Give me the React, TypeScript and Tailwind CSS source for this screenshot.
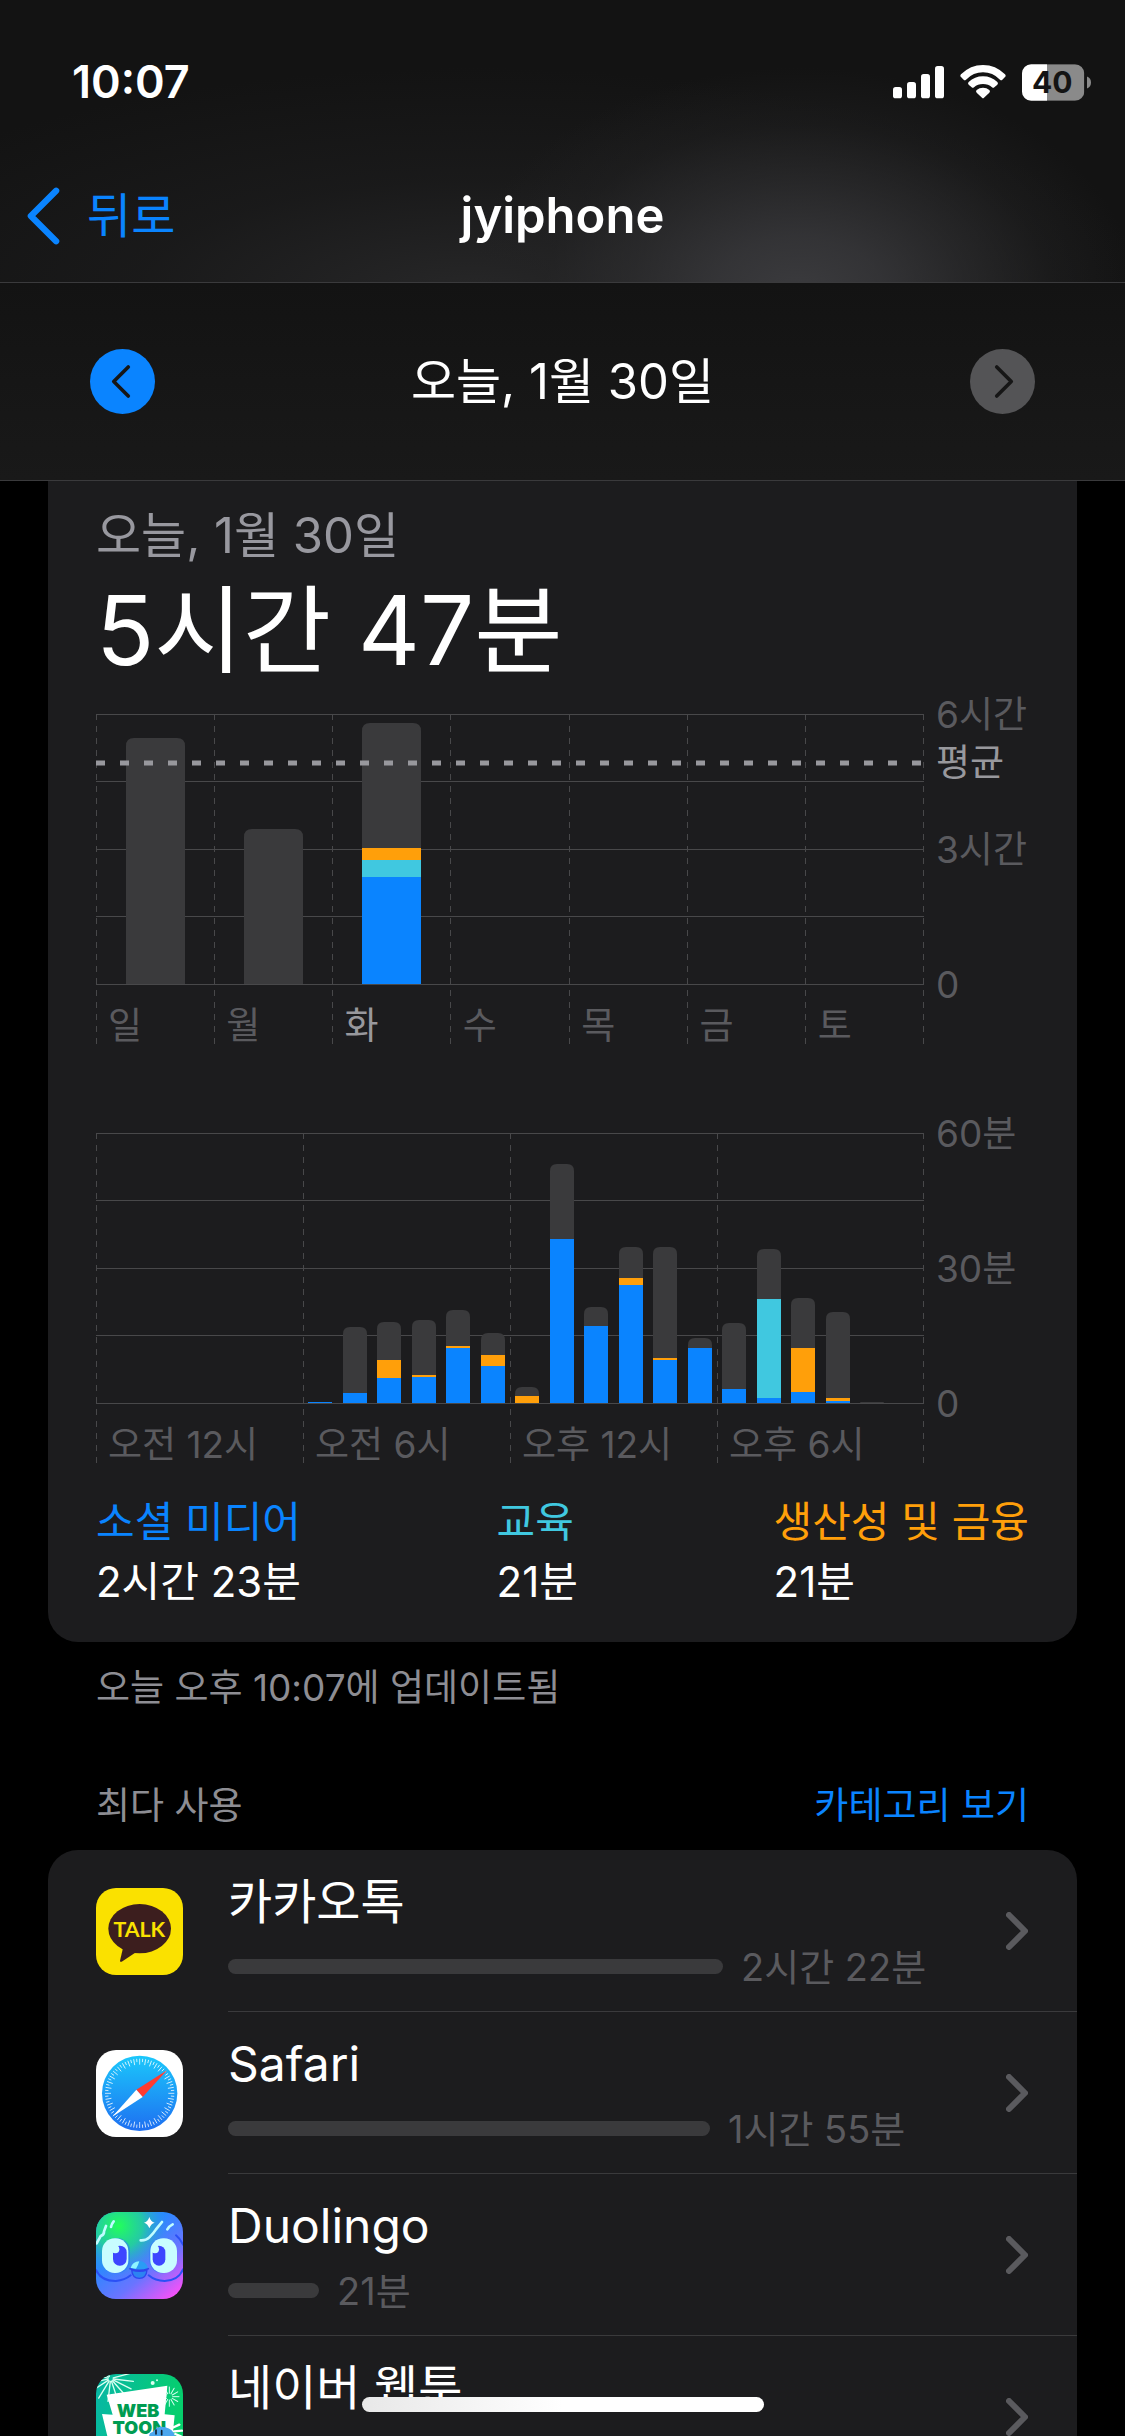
import type { ReactNode } from 'react';

const BLUE = '#0a84ff';
const CYAN = '#40c8e0';
const ORANGE = '#ff9f0a';
const GRAY = '#3a3a3c';

type Bar = { slot: number; total: number; parts?: [string, number][] };

// Heights are in chart units, 270 units is the full height of the plot
const weekBars: Bar[] = [
    { slot: 0, total: 246 },
    { slot: 1, total: 155 },
    { slot: 2, total: 261, parts: [[BLUE, 107], [CYAN, 17], [ORANGE, 12]] },
];

const dayBars: Bar[] = [
    { slot: 6, total: 1, parts: [[BLUE, 1]] },
    { slot: 7, total: 76, parts: [[BLUE, 10]] },
    { slot: 8, total: 81, parts: [[BLUE, 25], [ORANGE, 18]] },
    { slot: 9, total: 83, parts: [[BLUE, 26], [ORANGE, 2]] },
    { slot: 10, total: 93, parts: [[BLUE, 55], [ORANGE, 2]] },
    { slot: 11, total: 70, parts: [[BLUE, 37], [ORANGE, 11]] },
    { slot: 12, total: 16, parts: [[ORANGE, 7]] },
    { slot: 13, total: 239, parts: [[BLUE, 164]] },
    { slot: 14, total: 96, parts: [[BLUE, 77]] },
    { slot: 15, total: 156, parts: [[BLUE, 118], [ORANGE, 7]] },
    { slot: 16, total: 156, parts: [[BLUE, 43], [ORANGE, 2]] },
    { slot: 17, total: 65, parts: [[BLUE, 55]] },
    { slot: 18, total: 80, parts: [[BLUE, 14]] },
    { slot: 19, total: 154, parts: [[BLUE, 5], [CYAN, 99]] },
    { slot: 20, total: 105, parts: [[BLUE, 11], [ORANGE, 44]] },
    { slot: 21, total: 91, parts: [[BLUE, 2], [ORANGE, 3]] },
    { slot: 22, total: 1 },
];

const legend = [
    { name: '소셜 미디어', time: '2시간 23분', color: 'text-[#0a84ff]' },
    { name: '교육', time: '21분', color: 'text-[#40c8e0]' },
    { name: '생산성 및 금융', time: '21분', color: 'text-[#ff9f0a]' },
];

type ChartProps = {
    title: string;
    bars: Bar[];
    slots: number;
    barWidth: number;
    radius: number;
    columns: string[];
    active?: number;
    scale: string[];
    average?: number;
};

function Chart({ title, bars, slots, barWidth, radius, columns, active, scale, average }: ChartProps) {
    const top = 24;
    const base = 294;
    const width = 828;
    const colWidth = width / columns.length;
    const slotWidth = width / slots;

    return (
        <svg viewBox="0 0 933 360" className="block w-full overflow-visible" role="img" aria-label={title}>
            {/* Grid */}
            {[0, 1, 2, 3, 4].map((i) => (
                <rect key={i} x="0" y={Math.floor(top + i * 67.5)} width={width} height="1" fill="#48484a" />
            ))}
            {[...columns, ''].map((_, i) => (
                <line
                    key={i}
                    x1={Math.min(Math.floor(i * colWidth), width - 1) + 0.5}
                    x2={Math.min(Math.floor(i * colWidth), width - 1) + 0.5}
                    y1={top}
                    y2="354"
                    stroke="#48484a"
                    strokeDasharray="6 6"
                />
            ))}

            {/* Bars */}
            {bars.map((bar) => {
                const x = Math.round(bar.slot * slotWidth + (slotWidth - barWidth) / 2);
                const r = Math.min(radius, bar.total);
                let y = base;
                return (
                    <g key={bar.slot}>
                        <path
                            d={`M${x} ${base}v${r - bar.total}q0 ${-r} ${r} ${-r}h${barWidth - 2 * r}q${r} 0 ${r} ${r}v${bar.total - r}z`}
                            fill={GRAY}
                        />
                        {bar.parts?.map(([color, h]) => {
                            y -= h;
                            return <rect key={color} x={x} y={y} width={barWidth} height={h} fill={color} />;
                        })}
                    </g>
                );
            })}

            {/* Average line */}
            {average && (
                <>
                    <line x1="0" x2={width} y1={average} y2={average} stroke="#98989d" strokeWidth="5" strokeDasharray="9 15" />
                    <text x="840" y={average + 13} fontSize="37" fill="#98989d">평균</text>
                </>
            )}

            {/* Axis labels */}
            {scale.map((label, i) => (
                <text key={label} x="840" y={top + i * 135 + 14} fontSize="37" fill="#5a5a5e">
                    {label}
                </text>
            ))}
            {columns.map((label, i) => (
                <text key={label} x={i * colWidth + 12} y="349" fontSize="37" fill={i === active ? '#98989d' : '#5a5a5e'}>
                    {label}
                </text>
            ))}
        </svg>
    );
}

function Chevron({ className, left }: { className: string; left?: boolean }) {
    return (
        <svg viewBox="0 0 22 38" className={className} fill="none" stroke="currentColor" strokeLinecap="round" strokeLinejoin="round" aria-hidden="true">
            <path d={left ? 'M19 3L3 19l16 16' : 'M3 3l16 16L3 35'} />
        </svg>
    );
}

function AppIcon({ children }: { children: ReactNode }) {
    return (
        <svg viewBox="0 0 261 261" className="size-[87px] shrink-0 rounded-[20px]" aria-hidden="true">
            {children}
        </svg>
    );
}

function KakaoIcon() {
    return (
        <AppIcon>
            <rect width="261" height="261" fill="#fae100" />
            <ellipse cx="131" cy="122" rx="94" ry="74" fill="#3c1e1e" />
            <path d="M81 180L72 218q0 5 5 3l44-29z" fill="#3c1e1e" />
            <text x="130" y="147" fontSize="64" fontWeight="700" textAnchor="middle" fill="#fae100" className="font-[Lato,sans-serif]">
                TALK
            </text>
        </AppIcon>
    );
}

function SafariIcon() {
    return (
        <AppIcon>
            <defs>
                <linearGradient id="safari" x1="0" y1="0" x2="0" y2="1">
                    <stop offset="0" stopColor="#1bc8fb" />
                    <stop offset="1" stopColor="#1e6ff1" />
                </linearGradient>
            </defs>
            <rect width="261" height="261" fill="#fff" />
            <circle cx="131" cy="130" r="113" fill="url(#safari)" />
            {Array.from({ length: 72 }, (_, i) => (
                <line
                    key={i}
                    x1="131"
                    x2="131"
                    y1="26"
                    y2={i % 2 ? 36 : 44}
                    stroke="#fff"
                    strokeWidth="2.2"
                    transform={`rotate(${i * 5} 131 130)`}
                />
            ))}
            <path d="M213 61L121 119l19 22z" fill="#ff3b30" />
            <path d="M49 200L121 119l19 22z" fill="#fff" />
        </AppIcon>
    );
}

function DuolingoIcon() {
    return (
        <AppIcon>
            <defs>
                <linearGradient id="duoBase" x1="0.2" y1="0" x2="1" y2="1">
                    <stop offset="0.3" stopColor="#2a88ff" />
                    <stop offset="0.62" stopColor="#6a74ff" />
                    <stop offset="0.95" stopColor="#ff4ff8" />
                </linearGradient>
                <radialGradient id="duoGreen" cx="0.26" cy="0.16" r="0.6">
                    <stop offset="0" stopColor="#22ff5a" />
                    <stop offset="0.45" stopColor="#22dc8c" stopOpacity="0.8" />
                    <stop offset="1" stopColor="#2a88ff" stopOpacity="0" />
                </radialGradient>
            </defs>
            <rect width="261" height="261" fill="url(#duoBase)" />
            <rect width="261" height="261" fill="url(#duoGreen)" />
            <g fill="none" stroke="#2b50f5" strokeWidth="6" strokeLinecap="round">
                <path d="M0 174q16 34 60 33 26-2 44-17" />
                <path d="M158 190q20 17 48 17 42-2 55-35" />
                <path d="M240 70q14 12 21 28" />
            </g>
            <g fill="none" stroke="#bffcff" strokeWidth="8" strokeLinecap="round">
                <path d="M2 94L14 72Q25 68 24 58L30 42" />
                <path d="M45 45q2-10 8-17" />
                <path d="M134 85q16 1 26-9 14-14 20-24l18-22" />
                <path d="M214 52q6-10 16-15" />
            </g>
            <path d="M160 15q4 14 16 17-12 4-16 17-4-13-16-17 12-3 16-17z" fill="#fff" />
            <rect x="24" y="78" width="78" height="106" rx="39" fill="#2b79f5" opacity="0.6" />
            <rect x="160" y="78" width="78" height="106" rx="39" fill="#2b79f5" opacity="0.6" />
            <rect x="18" y="79" width="79" height="104" rx="38" fill="#c8fdff" />
            <rect x="163" y="79" width="80" height="104" rx="38" fill="#c8fdff" />
            {/* Pupils with a round highlight cut at the upper left */}
            <rect x="51" y="101" width="41" height="60" rx="20" fill="#3d45ff" />
            <circle cx="58" cy="112" r="12" fill="#c8fdff" />
            <rect x="170" y="101" width="38" height="60" rx="19" fill="#3d45ff" />
            <circle cx="177" cy="112" r="12" fill="#c8fdff" />
            <path d="M102 170q6-22 27-23 22 1 28 23-27 8-55 0z" fill="#2a9cf5" />
            <path d="M104 168q6-20 26-20-4 14-10 22z" fill="#8ff5ff" />
            <path d="M102 170q28 10 55 0" fill="none" stroke="#2e46ee" strokeWidth="5" strokeLinecap="round" />
            <path d="M107 174q24 8 46 0-2 25-23 25t-23-25z" fill="#2c83f2" stroke="#2e46ee" strokeWidth="4" />
        </AppIcon>
    );
}

function WebtoonIcon() {
    return (
        <AppIcon>
            <defs>
                <linearGradient id="webtoon" x1="0" y1="0.1" x2="1" y2="0.3">
                    <stop offset="0" stopColor="#07b7a5" />
                    <stop offset="1" stopColor="#06cf6c" />
                </linearGradient>
            </defs>
            <rect width="261" height="261" fill="url(#webtoon)" />
            <g stroke="#d9fff0" strokeWidth="4" strokeLinecap="round">
                {[0, 20, 42, 65, 90, 115, 140, 162, 185, 210, 235, 338].map((a) => (
                    <line key={a} x1="52" y1="15" x2="112" y2="22" transform={`rotate(${a} 44 14)`} />
                ))}
                {[0, 30, 60, 90, 120, 150, 180, 210, 240, 270, 300, 330].map((a) => (
                    <line key={a} x1="230" y1="68" x2="249" y2="68" strokeWidth="3" transform={`rotate(${a} 220 68)`} />
                ))}
            </g>
            <circle cx="170" cy="27" r="6" fill="#d9fff0" />
            <circle cx="183" cy="19" r="3" fill="#d9fff0" />
            <path d="M32 62L214 35l-8 86 30 3-14 137H52L18 120l32 2z" fill="#fff" />
            <g fill="#009c52" fontWeight="900" className="font-[Inter,sans-serif]">
                <text x="126" y="130" fontSize="54" textAnchor="middle">WEB</text>
                <text x="130" y="180" fontSize="54" textAnchor="middle">TOON</text>
            </g>
            <path d="M160 188q-2-12 10-14 14-20 38-14 24 6 30 28l10 73h-90z" fill="#4ba6ee" />
            <path d="M180 168v12M197 170v12" stroke="#123" strokeWidth="5" strokeLinecap="round" />
            <path d="M228 162l22-10M234 172l24-2M238 180l18 8" stroke="#fff" strokeWidth="7" strokeLinecap="round" />
        </AppIcon>
    );
}

const apps = [
    { name: '카카오톡', time: '2시간 22분', width: 495, icon: <KakaoIcon /> },
    { name: 'Safari', time: '1시간 55분', width: 482, icon: <SafariIcon /> },
    { name: 'Duolingo', time: '21분', width: 91, icon: <DuolingoIcon /> },
    { name: '네이버 웹툰', icon: <WebtoonIcon /> },
];

function StatusBar() {
    return (
        <div className="flex h-[164px] items-center justify-between pr-[34px] pl-[72px]">
            <span className="text-[45px] leading-[56px] font-semibold">10:07</span>
            <div className="flex items-center gap-4">
                <svg viewBox="0 0 153 99" className="h-[33px] w-[51px]" fill="#fff" role="img" aria-label="신호 세기">
                    <rect x="0" y="63" width="27" height="34" rx="8" />
                    <rect x="42" y="48" width="27" height="49" rx="8" />
                    <rect x="84" y="24" width="27" height="73" rx="8" />
                    <rect x="126" y="0" width="27" height="97" rx="8" />
                </svg>
                <svg viewBox="0 0 138 102" className="h-[34px] w-[46px]" fill="#fff" role="img" aria-label="Wi-Fi">
                    <path d="M3 28Q31 0 69 0t66 28q4 4 0 8l-8 8q-3 3-7 0Q98 22 69 22T18 44q-4 3-7 0l-8-8q-4-4 0-8z" />
                    <path d="M26 51q18-17 43-17t43 17q4 4 0 8l-9 8q-3 3-7 0-11-10-27-10T42 67q-4 3-7 0l-9-8q-4-4 0-8z" />
                    <path d="M50 75q8-7 19-7t19 7q4 4 0 8L72 98q-3 3-6 0L50 83q-4-4 0-8z" />
                </svg>
                <svg viewBox="0 0 207 110" className="h-[37px] w-[69px]" role="img" aria-label="배터리 40%">
                    <clipPath id="battery">
                        <rect width="187" height="110" rx="28" />
                    </clipPath>
                    <g clipPath="url(#battery)">
                        <rect width="187" height="110" fill="#8a8a8a" />
                        <rect width="75" height="110" fill="#fff" />
                    </g>
                    <path d="M195 37q12 5 12 18t-12 18z" fill="#8a8a8a" />
                    <text x="91" y="88" fontSize="90" fontWeight="700" textAnchor="middle" fill="#141414">40</text>
                </svg>
            </div>
        </div>
    );
}

export default function App() {
    return (
        <div className="relative h-screen overflow-hidden bg-black font-[Inter,'Noto_Sans_CJK_KR',sans-serif] text-white">
            <header>
                <div className="border-b border-[#3a3a3c] bg-[radial-gradient(ellipse_30%_80%_at_71%_104%,#3b3b3e_0%,#39393cd0_25%,#303032a0_50%,#24242560_75%,transparent_100%),radial-gradient(ellipse_60%_80%_at_42%_104%,#272728_0%,#20202180_50%,transparent_100%)] bg-[#131313]">
                    <StatusBar />
                    <nav className="grid h-[118px] grid-cols-[1fr_auto_1fr] items-center px-[26px] pb-[14px]">
                        <a href="#back" className="flex items-center gap-[26px] text-[48px] leading-[60px] text-[#0a84ff]">
                            <Chevron left className="h-[60px] w-[35px] stroke-4" />
                            뒤로
                        </a>
                        <h1 className="text-[49px] leading-[60px] font-semibold">jyiphone</h1>
                    </nav>
                </div>
                <div className="flex h-[198px] items-center justify-between border-b border-[#3a3a3c] bg-linear-to-b from-[#131313] to-[#191919] px-[90px]">
                    <button type="button" aria-label="이전 날" className="flex size-[65px] items-center justify-center rounded-full bg-[#0a84ff] pr-1 text-[#161616]">
                        <Chevron left className="h-[35px] w-[20px] stroke-4" />
                    </button>
                    <p className="text-[49px] leading-[60px]">오늘, 1월 30일</p>
                    <button type="button" disabled aria-label="다음 날" className="flex size-[65px] items-center justify-center rounded-full bg-[#545456] pl-1 text-[#161616]">
                        <Chevron className="h-[35px] w-[20px] stroke-4" />
                    </button>
                </div>
            </header>

            <main className="px-12">
                {/* Screen time summary */}
                <section className="rounded-b-[30px] bg-[#1c1c1e] px-12 pt-[25px] pb-[30px]">
                    <h2 className="text-[49px] leading-[60px] text-[#98989f]">오늘, 1월 30일</h2>
                    <p className="pt-1 text-[96px] leading-[120px]">5시간 47분</p>
                    <div className="space-y-[59px]">
                        <Chart
                            title="주간 사용 시간"
                            bars={weekBars}
                            slots={7}
                            barWidth={59}
                            radius={8}
                            columns={['일', '월', '화', '수', '목', '금', '토']}
                            active={2}
                            scale={['6시간', '3시간', '0']}
                            average={73}
                        />
                        <Chart
                            title="시간대별 사용 시간"
                            bars={dayBars}
                            slots={24}
                            barWidth={24}
                            radius={7}
                            columns={['오전 12시', '오전 6시', '오후 12시', '오후 6시']}
                            scale={['60분', '30분', '0']}
                        />
                    </div>
                    <dl className="mt-[23px] flex justify-between text-[42px] leading-[60px]">
                        {legend.map((item) => (
                            <div key={item.name}>
                                <dt className={item.color}>{item.name}</dt>
                                <dd>{item.time}</dd>
                            </div>
                        ))}
                    </dl>
                </section>
                <p className="px-12 pt-[21px] text-[37px] leading-[50px] text-[#8d8d93]">오늘 오후 10:07에 업데이트됨</p>

                {/* Most used apps */}
                <div className="mt-[68px] flex items-center justify-between px-12 pb-[19px] text-[37px] leading-[50px]">
                    <h2 className="text-[#8d8d93]">최다 사용</h2>
                    <button type="button" className="text-[#0a84ff]">카테고리 보기</button>
                </div>
                <ul className="rounded-t-[30px] bg-[#1c1c1e] pl-12">
                    {apps.map((app) => (
                        <li key={app.name}>
                            <a href="#app" className="flex h-[162px] items-center gap-[45px]">
                                {app.icon}
                                <div className="flex h-full flex-1 items-center justify-between border-b border-[#3a3a3c] pr-[49px]">
                                    <div className="pt-3">
                                        <h3 className="text-[48px] leading-[60px]">{app.name}</h3>
                                        <div className="flex h-[70px] items-center gap-[18px]">
                                            <div className="h-[15px] rounded-full bg-[#3a3a3c]" style={{ width: app.width }} />
                                            <span className="text-[38px] leading-[50px] text-[#5a5a5e]">{app.time}</span>
                                        </div>
                                    </div>
                                    <Chevron className="h-[38px] w-[22px] stroke-6 text-[#5a5a5e]" />
                                </div>
                            </a>
                        </li>
                    ))}
                </ul>
            </main>

            {/* Home indicator */}
            <div className="absolute bottom-6 left-1/2 h-[15px] w-[402px] -translate-x-1/2 rounded-full bg-linear-to-r from-[#e8e8e8] via-white to-white" />
        </div>
    );
}
